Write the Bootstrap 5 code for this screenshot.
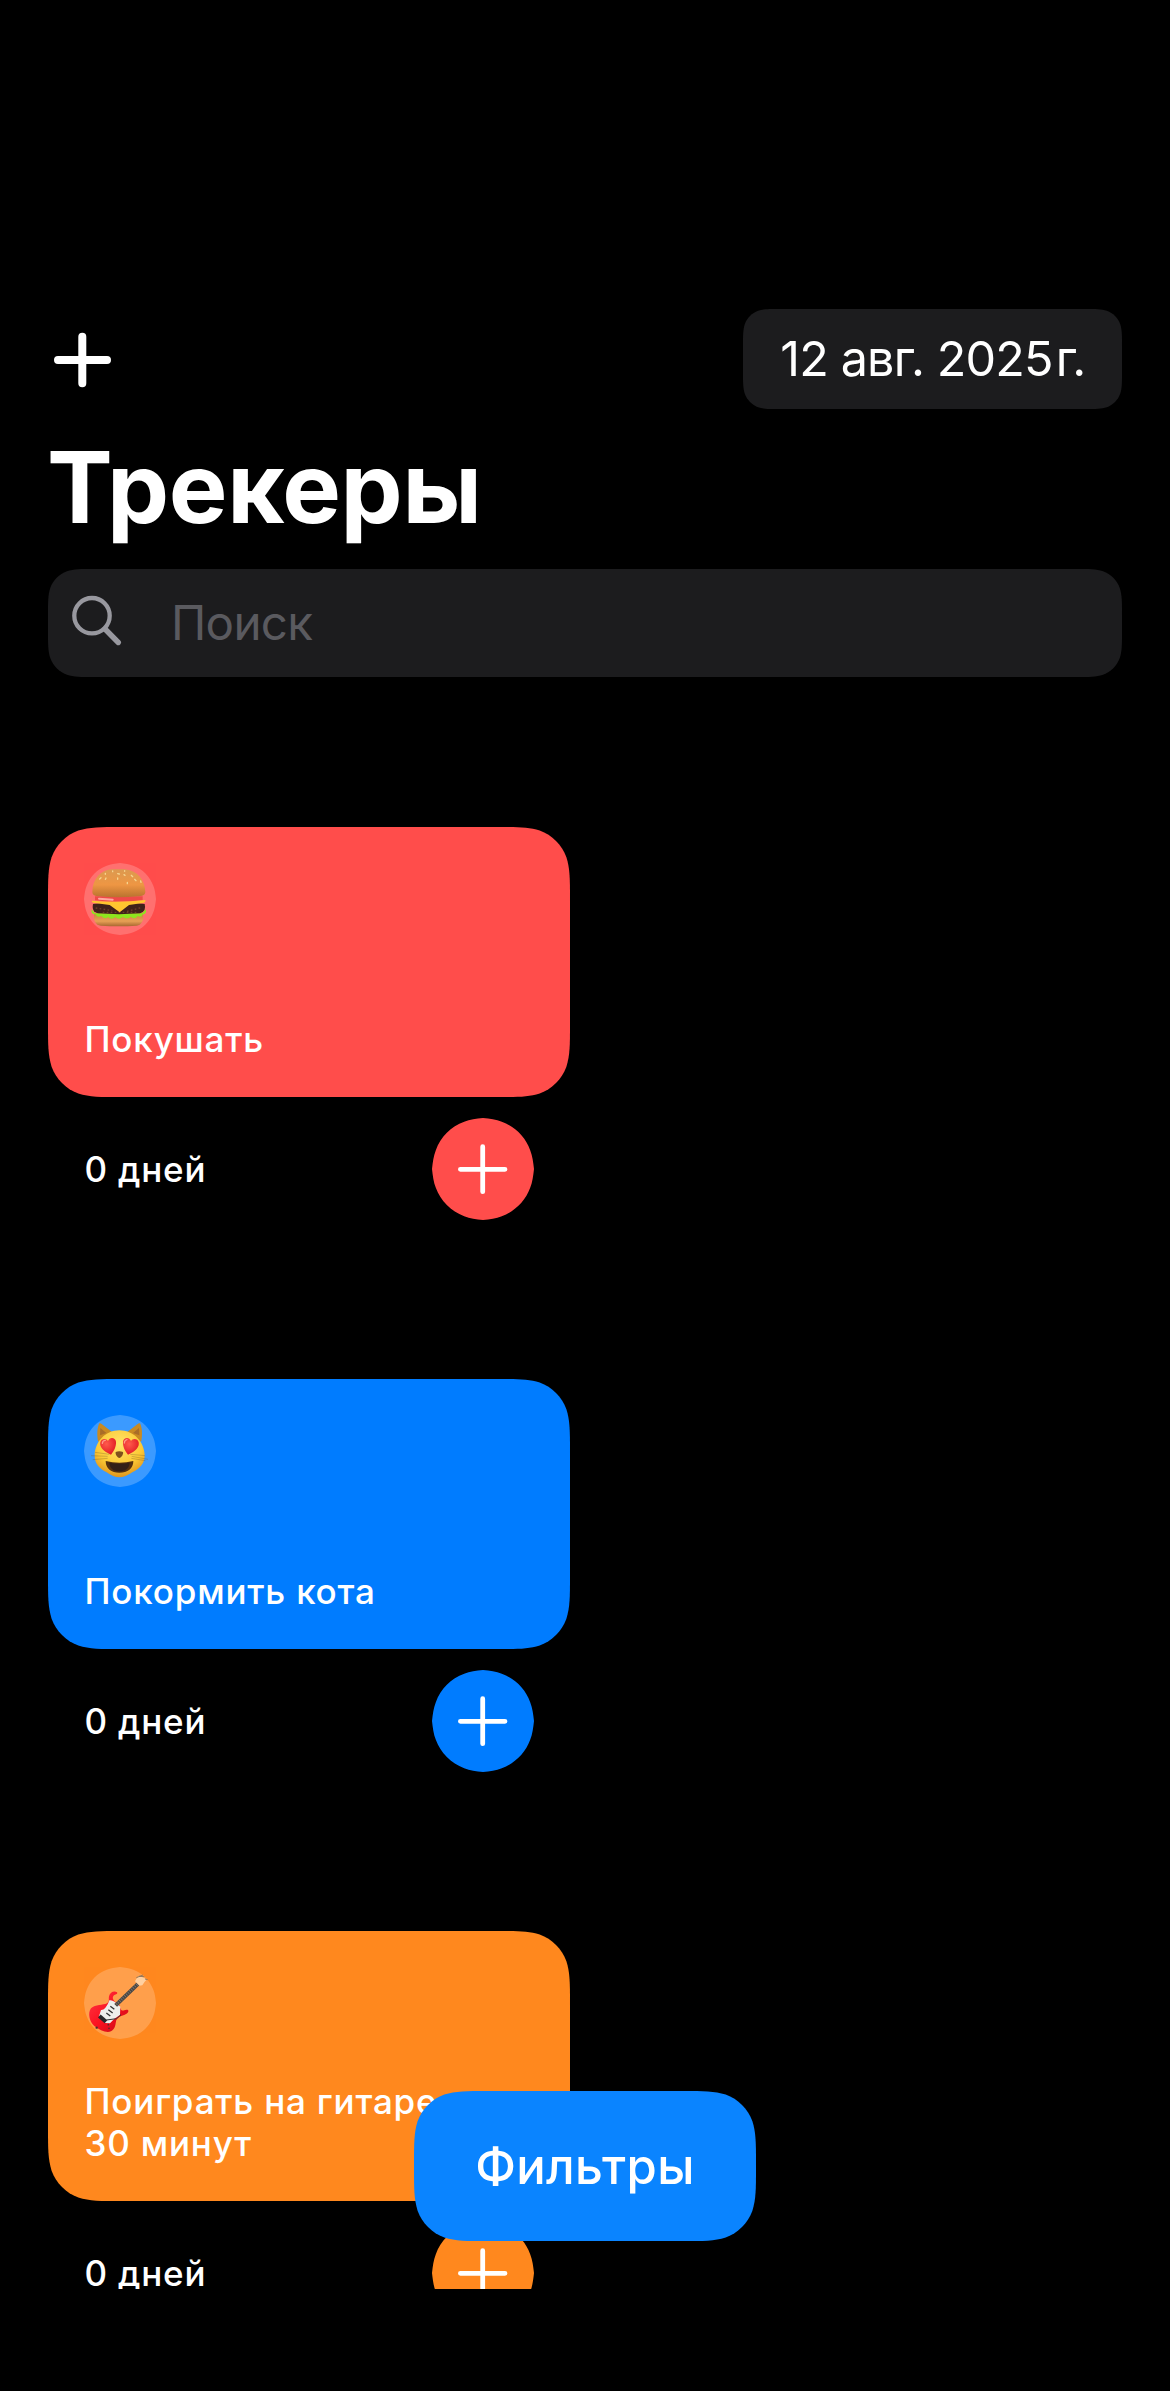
<!DOCTYPE html>
<html lang="ru" data-bs-theme="dark">
<head>
<meta charset="utf-8">
<meta name="viewport" content="width=device-width, initial-scale=1">
<title>Трекеры</title>
<link href="https://cdn.jsdelivr.net/npm/bootstrap@5.3.0/dist/css/bootstrap.min.css" rel="stylesheet">
<style>
  body { background: #000; color: #fff; font-family: Inter, "Liberation Sans", sans-serif; }
  svg { display: block; overflow: visible; }
  .screen { width: 1170px; height: 2391px; padding: 309px 48px 0; background: #000; }
  .topbar { height: 100px; }
  .add-btn { width: 69px; height: 100px; }
  .date-chip { width: 379px; height: 100px; background: #1c1c1e; font-size: 48.5px; line-height: 100px; letter-spacing: -.85px;
    clip-path: path("M36.69 0H342.31C352.88 0 358.16 0 363.84 1.8C370.05 4.06 374.94 8.95 377.2 15.16C379 20.84 379 26.12 379 36.69V63.31C379 73.88 379 79.16 377.2 84.84C374.94 91.05 370.05 95.94 363.84 98.2C358.16 100 352.88 100 342.31 100H36.69C26.12 100 20.84 100 15.16 98.2C8.95 95.94 4.06 91.05 1.8 84.84C0 79.16 0 73.88 0 63.31V36.69C0 26.12 0 20.84 1.8 15.16C4.06 8.95 8.95 4.06 15.16 1.8C20.84 0 26.12 0 36.69 0Z"); }
  .thin-gap { word-spacing: -9px; letter-spacing: -1.6px; }
  .screen-title { font-size: 98.6px; font-weight: 700; line-height: 120px; height: 120px; margin: 18px 0 0 -1px; letter-spacing: -.3px; }
  .search-box { height: 108px; margin-top: 22px; background: #1c1c1e; padding-left: 24px;
    clip-path: path("M45.86 0H1028.14C1041.35 0 1047.95 0 1055.06 2.25C1062.82 5.07 1068.93 11.18 1071.75 18.94C1074 26.05 1074 32.65 1074 45.86V62.14C1074 75.35 1074 81.95 1071.75 89.06C1068.93 96.82 1062.82 102.93 1055.06 105.75C1047.95 108 1041.35 108 1028.14 108H45.86C32.65 108 26.05 108 18.94 105.75C11.18 102.93 5.07 96.82 2.25 89.06C0 81.95 0 75.35 0 62.14V45.86C0 32.65 0 26.05 2.25 18.94C5.07 11.18 11.18 5.07 18.94 2.25C26.05 0 32.65 0 45.86 0Z"); }
  .search-hint { font-size: 47.5px; line-height: 108px; color: #5a5a5f; margin-left: 46px; letter-spacing: -.7px; }
  .tracker-list { height: 1612px; padding-top: 150px; overflow: hidden; }
  .tracker { width: 522px; height: 552px; }
  .tracker-face { height: 270px; padding: 36px 0 37px 36px; background: var(--tint);
    clip-path: path("M73.38 0H448.62C469.75 0 480.32 0 491.69 3.6C504.1 8.11 513.89 17.9 518.4 30.31C522 41.68 522 52.25 522 73.38V196.62C522 217.75 522 228.32 518.4 239.69C513.89 252.1 504.1 261.89 491.69 266.4C480.32 270 469.75 270 448.62 270H73.38C52.25 270 41.68 270 30.31 266.4C17.9 261.89 8.11 252.1 3.6 239.69C0 228.32 0 217.75 0 196.62V73.38C0 52.25 0 41.68 3.6 30.31C8.11 17.9 17.9 8.11 30.31 3.6C41.68 0 52.25 0 73.38 0Z"); }
  .tracker-name, .tracker-days { font-size: 35px; font-weight: 500; line-height: 42px; white-space: nowrap; letter-spacing: .8px; padding-left: .5px; }
  .tracker-foot { height: 102px; margin-top: 21px; padding: 0 36px; }
  .tint-red { --tint: #ff4d4b; }
  .tint-blue { --tint: #007cff; }
  .tint-orange { --tint: #ff881e; }
  .done-btn { color: var(--tint); }
  .filter-btn { left: 414px; top: 2091px; width: 342px; height: 150px; background: #0a84ff; font-size: 49px; font-weight: 500; line-height: 152px; letter-spacing: .3px;
    clip-path: path("M73.38 0H268.62C289.75 0 300.32 0 311.69 3.6C324.1 8.11 333.89 17.9 338.4 30.31C342 41.68 342 52.25 342 73.38V76.62C342 97.75 342 108.32 338.4 119.69C333.89 132.1 324.1 141.89 311.69 146.4C300.32 150 289.75 150 268.62 150H73.38C52.25 150 41.68 150 30.31 146.4C17.9 141.89 8.11 132.1 3.6 119.69C0 108.32 0 97.75 0 76.62V73.38C0 52.25 0 41.68 3.6 30.31C8.11 17.9 17.9 8.11 30.31 3.6C41.68 0 52.25 0 73.38 0Z"); }
</style>
</head>
<body>
<svg width="0" height="0" class="position-absolute" aria-hidden="true">
  <defs>
    <symbol id="disc" viewBox="0 0 102 102">
      <path fill="currentColor" d="M51 0C58 .8 64 1.500 69.800 3.820C83 8.620 93.380 19 98.180 32.200C100.500 38 101.200 44 102 51C101.200 58 100.500 64 98.180 69.800C93.380 83 83 93.380 69.800 98.180C64 100.500 58 101.200 51 102C44 101.200 38 100.500 32.200 98.180C19 93.380 8.620 83 3.820 69.800C1.500 64 .8 58 0 51C.8 44 1.500 38 3.820 32.200C8.620 19 19 8.620 32.200 3.820C38 1.500 44 .8 51 0Z"/>
    </symbol>
    <symbol id="done" viewBox="0 0 102 102">
      <use href="#disc" width="102" height="102"/>
      <path d="M28.400 51.300H73M50.700 28.700V73.700" stroke="#fff" stroke-width="4.800" stroke-linecap="round"/>
    </symbol>
    <linearGradient id="bun" x1="0" y1="0" x2="0" y2="1"><stop offset="0" stop-color="#dc9a50"/><stop offset=".55" stop-color="#ee9643"/><stop offset="1" stop-color="#b9722f"/></linearGradient>
    <linearGradient id="bun2" x1="0" y1="0" x2="0" y2="1"><stop offset="0" stop-color="#c9833c"/><stop offset=".6" stop-color="#e7a055"/><stop offset="1" stop-color="#a86730"/></linearGradient>
    <radialGradient id="fur" cx=".5" cy=".3" r=".75"><stop offset="0" stop-color="#ffe46a"/><stop offset=".6" stop-color="#fcc935"/><stop offset="1" stop-color="#d98a18"/></radialGradient>
    <radialGradient id="heart" cx=".4" cy=".35" r=".7"><stop offset="0" stop-color="#ff5a4c"/><stop offset="1" stop-color="#e01822"/></radialGradient>
    <linearGradient id="gtr" x1="0" y1="0" x2="1" y2="1"><stop offset="0" stop-color="#ff3a48"/><stop offset=".5" stop-color="#fb1220"/><stop offset="1" stop-color="#c40a14"/></linearGradient>
  </defs>
</svg>

<main class="screen position-relative overflow-hidden">
  <header class="topbar d-flex justify-content-between align-items-center">
    <div class="add-btn" role="button" aria-label="Добавить">
      <svg width="69" height="100"><path d="M10 51H59M34.300 27.700V74.300" stroke="#fff" stroke-width="8" stroke-linecap="round"/></svg>
    </div>
    <div class="date-chip text-center text-nowrap">12 авг. 2025<span class="thin-gap"> г.</span></div>
  </header>
  <h1 class="screen-title">Трекеры</h1>
  <div class="search-box d-flex">
    <svg width="53" height="108" fill="none" stroke="#98989f" stroke-linecap="round"><circle cx="20" cy="46.700" r="17.700" stroke-width="4.300"/><path d="M33 60L46.300 73.500" stroke-width="5.400"/></svg>
    <span class="search-hint">Поиск</span>
  </div>

  <section class="tracker-list">
    <article class="tracker tint-red">
      <div class="tracker-face d-flex flex-column justify-content-between">
        <svg width="72" height="72" viewBox="42 39 216 216">
          <g color="#fff" opacity=".2"><use href="#disc" x="42" y="39" width="216" height="216"/></g>
          <path fill="url(#bun2)" d="M72 190H219C222 212 215 225 200 227Q146 231 92 227C76 225 70 212 72 190Z"/>
          <path fill="#8ee51e" d="M65 178L75 190H216L228 178C230 190 224 195 218 193C215 203 208 201 203 198C196 208 188 205 182 200C174 209 164 204 158 201C150 209 141 206 136 201C129 208 119 207 115 201C106 208 98 204 94 198C86 203 78 200 78 193C70 194 62 190 65 178Z"/>
          <path fill="#40211a" d="M69 162Q146 150 224 162Q230 184 210 190Q146 195 84 190C70 187 66 176 69 162Z"/>
          <path stroke="#70402b" stroke-width="4" stroke-dasharray="5 7" fill="none" d="M77 174L127 182M171 184L216 172M98 187H201"/>
          <path fill="#ef4a48" d="M75 139H218V151Q146 160 75 151Z"/><path d="M87 146L128 149" stroke="#ffa8a0" stroke-width="6" stroke-linecap="round"/>
          <path fill="#ffc52f" d="M66 152Q146 159 226 150C228 156 224 158 218 159L177 165L149 187L119 165L74 159C68 158 64 156 66 152Z"/>
          <path fill="url(#bun)" d="M67 125C68 84 94 60 127 58H163C202 61 224 89 226 125C226 136 216 138 204 139Q146 145 88 139C76 138 67 136 67 125Z"/>
          <g stroke="#f6d48e" stroke-width="4" stroke-linecap="round"><path d="M106 70V73M128 63V65M143 71L148 72M162 74L165 76M184 76L188 80M93 83L89 87M108 84L106 88M143 84V88M172 97V101M194 88L198 92M212 93L213 97M164 62V64"/></g>
        </svg>
        <div class="tracker-name">Покушать</div>
      </div>
      <div class="tracker-foot d-flex justify-content-between align-items-center">
        <span class="tracker-days">0 дней</span>
        <svg class="done-btn" width="102" height="102"><use href="#done"/></svg>
      </div>
    </article>

    <article class="tracker tint-blue">
      <div class="tracker-face d-flex flex-column justify-content-between">
        <svg width="72" height="72" viewBox="42 45 216 216">
          <g color="#fff" opacity=".23"><use href="#disc" x="42" y="45" width="216" height="216"/></g>
          <path fill="#c98a22" d="M84 124C80 101 82 82 88 70Q91 68 96 73L126 96L111 132ZM214 124C218 101 216 82 210 70Q207 68 202 73L172 96L187 132Z"/>
          <path fill="#a96d28" d="M90 106L91 84L109 99ZM208 106L207 84L189 99Z"/>
          <path fill="url(#fur)" d="M148 91C190 91 222 124 224 164C225 192 207 207 187 217Q166 232 148 232Q130 232 110 217C90 207 73 192 74 164C76 124 107 91 148 91Z"/>
          <path fill="#56310f" d="M107 183Q148 193 190 183C190 206 173 218 148 218C124 218 107 206 107 183Z"/><path fill="#332018" d="M118 188Q148 194 179 188C178 205 166 214 148 214C131 214 119 205 118 188Z"/>
          <g fill="url(#heart)"><path d="M123 164C100 154 88 141 91 127C94 115 109 114 114 123C119 110 136 112 138 125C139 140 132 152 123 164Z"/><path d="M174 164C197 154 209 141 206 127C203 115 188 114 183 123C178 110 161 112 159 125C158 140 165 152 174 164Z"/></g>
          <path d="M97 130Q98 121 106 121M163 129Q164 120 171 119" stroke="#ff9a8a" stroke-width="4" stroke-linecap="round" fill="none"/>
          <path fill="#80511d" d="M137 156Q148 152 159 156C161 163 154 173 148 174C142 173 135 163 137 156Z"/>
          <path d="M113 169L63 167M113 175L68 179M118 163L75 157M185 169L234 178M184 175L226 182M181 163L225 167" stroke="#775e2c" stroke-width="1.500" opacity=".65"/>
        </svg>
        <div class="tracker-name">Покормить кота</div>
      </div>
      <div class="tracker-foot d-flex justify-content-between align-items-center">
        <span class="tracker-days">0 дней</span>
        <svg class="done-btn" width="102" height="102"><use href="#done"/></svg>
      </div>
    </article>

    <article class="tracker tint-orange">
      <div class="tracker-face d-flex flex-column justify-content-between">
        <svg width="72" height="72" viewBox="42 36 216 216">
          <g color="#fff" opacity=".2"><use href="#disc" x="42" y="36" width="216" height="216"/></g>
          <path fill="url(#gtr)" d="M141 112C132 106 120 112 117 124C115 135 120 138 111 145C99 151 76 148 63 160C52 175 59 201 73 213C89 226 110 235 123 229C137 221 136 207 139 195C145 184 158 183 168 177C177 172 178 163 169 164C160 166 156 169 152 162C148 152 148 145 139 142C128 138 125 125 133 120C138 118 144 117 141 112Z"/>
          <path fill="#eeeeec" d="M118 136C124 134 131 139 138 143L151 155L150 180C139 186 130 194 120 205L105 204L87 184L93 165C101 166 110 158 118 136Z"/>
          <path d="M137 151L208 83" stroke="#4a4643" stroke-width="12"/>
          <path d="M139 148L205 85" stroke="#85807a" stroke-width="8" stroke-dasharray="2 5"/>
          <path fill="#ffd0a0" d="M195 79L199 71L208 63L222 68L230 74L224 80L217 91L208 92Z"/>
          <path d="M199 68L219 60M207 64L223 65M225 72L233 74" stroke="#80715f" stroke-width="2.500"/>
          <path d="M109 174L121 183M115 164L128 174M121 154L133 163" stroke="#333" stroke-width="4"/>
          <path d="M88 183L108 200" stroke="#28282a" stroke-width="12"/><path d="M109 195L140 191L153 179" fill="none" stroke="#333" stroke-width="3"/>
          <g fill="#4f302c"><circle cx="80" cy="218" r="3.500"/><circle cx="115" cy="209" r="2.500"/><circle cx="117" cy="220" r="2.500"/></g>
        </svg>
        <div class="tracker-name">Поиграть на гитаре<br>30 минут</div>
      </div>
      <div class="tracker-foot d-flex justify-content-between align-items-center">
        <span class="tracker-days">0 дней</span>
        <svg class="done-btn" width="102" height="102"><use href="#done"/></svg>
      </div>
    </article>
  </section>

  <div class="filter-btn position-absolute text-center" role="button">Фильтры</div>
</main>
<script src="https://cdn.jsdelivr.net/npm/bootstrap@5.3.0/dist/js/bootstrap.bundle.min.js"></script>
</body>
</html>
